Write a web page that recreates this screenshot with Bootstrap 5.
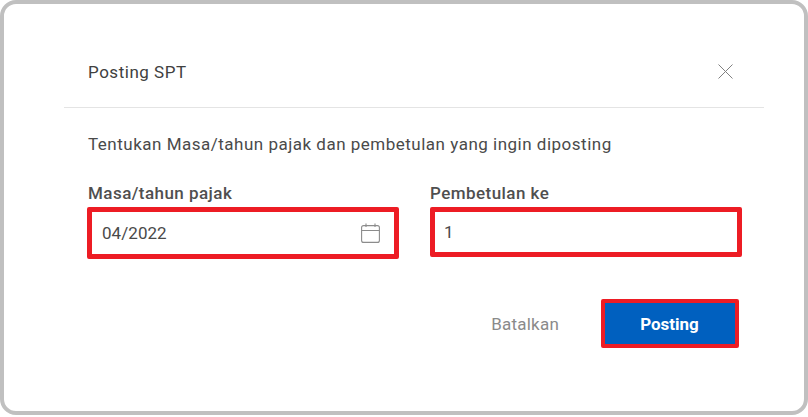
<!DOCTYPE html>
<html lang="id">
<head>
<meta charset="utf-8">
<title>Posting SPT</title>
<link href="https://cdn.jsdelivr.net/npm/bootstrap@5.3.0/dist/css/bootstrap.min.css" rel="stylesheet">
<style>
html,body{margin:0;height:417px;overflow:hidden;background:#fff}
body{font-family:Roboto,"Liberation Sans",sans-serif;color:#444}
.frame{width:808px;height:415px;border:4px solid #c0c0c0;border-radius:16px;background:#fff;padding:0 40px 0 60px}
.head{height:104px;border-bottom:1px solid #e4e4e4;padding:32px 31px 0 24px}
.head-title{font-size:17px;font-weight:400;letter-spacing:.52px;line-height:20px;color:#404040;margin:0}
.close-x{width:15px;height:15px;display:block}
.form-zone{padding:27px 0 0 23px}
.intro{font-size:17px;letter-spacing:.5px;line-height:19px;color:#4a4a4a;margin:0 0 30px;padding-left:1px}
.fields{gap:31px}
.field{width:312px}
.lbl{display:block;font-size:17px;font-weight:500;letter-spacing:.45px;line-height:19px;color:#4f4f4f;margin:0 0 4px}
.lbl-a{padding-left:1px}
.annot{border:5px solid #ed1c24;border-radius:2px;background:#fff;display:flex;align-items:center;justify-content:space-between;height:52px;padding:0 14px 0 10px}
.annot-b{height:50px;margin-top:1px;padding-left:9px}
.val{border:0;outline:0;padding:0;background:transparent;font:400 17px/19px Roboto,sans-serif;letter-spacing:.05px;color:#4a4a4a;width:200px}
.acts{padding:40px 25px 0 0;gap:42px}
.cancel{font-size:17px;font-weight:400;letter-spacing:.22px;color:#8a8a8a;padding:2px 0 0;border:0;background:none}
.post-wrap{border:4px solid #ed1c24;border-radius:2px;width:138px;height:49px;display:flex}
.post-btn{flex:1;border:0;border-radius:0;background:#0060bf;color:#fff;font-size:17px;font-weight:700;padding:2px 1px 0 0;letter-spacing:0}
.post-btn:hover{background:#0060bf;color:#fff}
</style>
</head>
<body>
<div class="frame">
  <div class="head d-flex align-items-center justify-content-between">
    <h1 class="head-title">Posting SPT</h1>
    <svg class="close-x" viewBox="0 0 15 15" fill="none" stroke="#808080" stroke-width="1"><path d="M.5 .5 14.5 14.5M14.5 .5 .5 14.5"/></svg>
  </div>
  <div class="form-zone">
    <p class="intro">Tentukan Masa/tahun pajak dan pembetulan yang ingin diposting</p>
    <div class="d-flex fields">
      <div class="field">
        <label class="lbl lbl-a" for="masa">Masa/tahun pajak</label>
        <div class="annot">
          <input id="masa" class="val" type="text" value="04/2022">
          <svg width="19" height="20" viewBox="0 0 19 20" fill="none" stroke="#8c8c8c" stroke-width="1.1"><rect x=".6" y="2.6" width="17.8" height="16.8" rx="2"/><path d="M.6 7.5H18.4M5 .5V4M14 .5V4"/></svg>
        </div>
      </div>
      <div class="field">
        <label class="lbl" for="ke">Pembetulan ke</label>
        <div class="annot annot-b">
          <input id="ke" class="val" type="text" value="1">
        </div>
      </div>
    </div>
    <div class="d-flex justify-content-end align-items-center acts">
      <button class="btn cancel" type="button">Batalkan</button>
      <div class="post-wrap"><button class="btn post-btn" type="button">Posting</button></div>
    </div>
  </div>
</div>
<script src="https://cdn.jsdelivr.net/npm/bootstrap@5.3.0/dist/js/bootstrap.bundle.min.js"></script>
</body>
</html>
